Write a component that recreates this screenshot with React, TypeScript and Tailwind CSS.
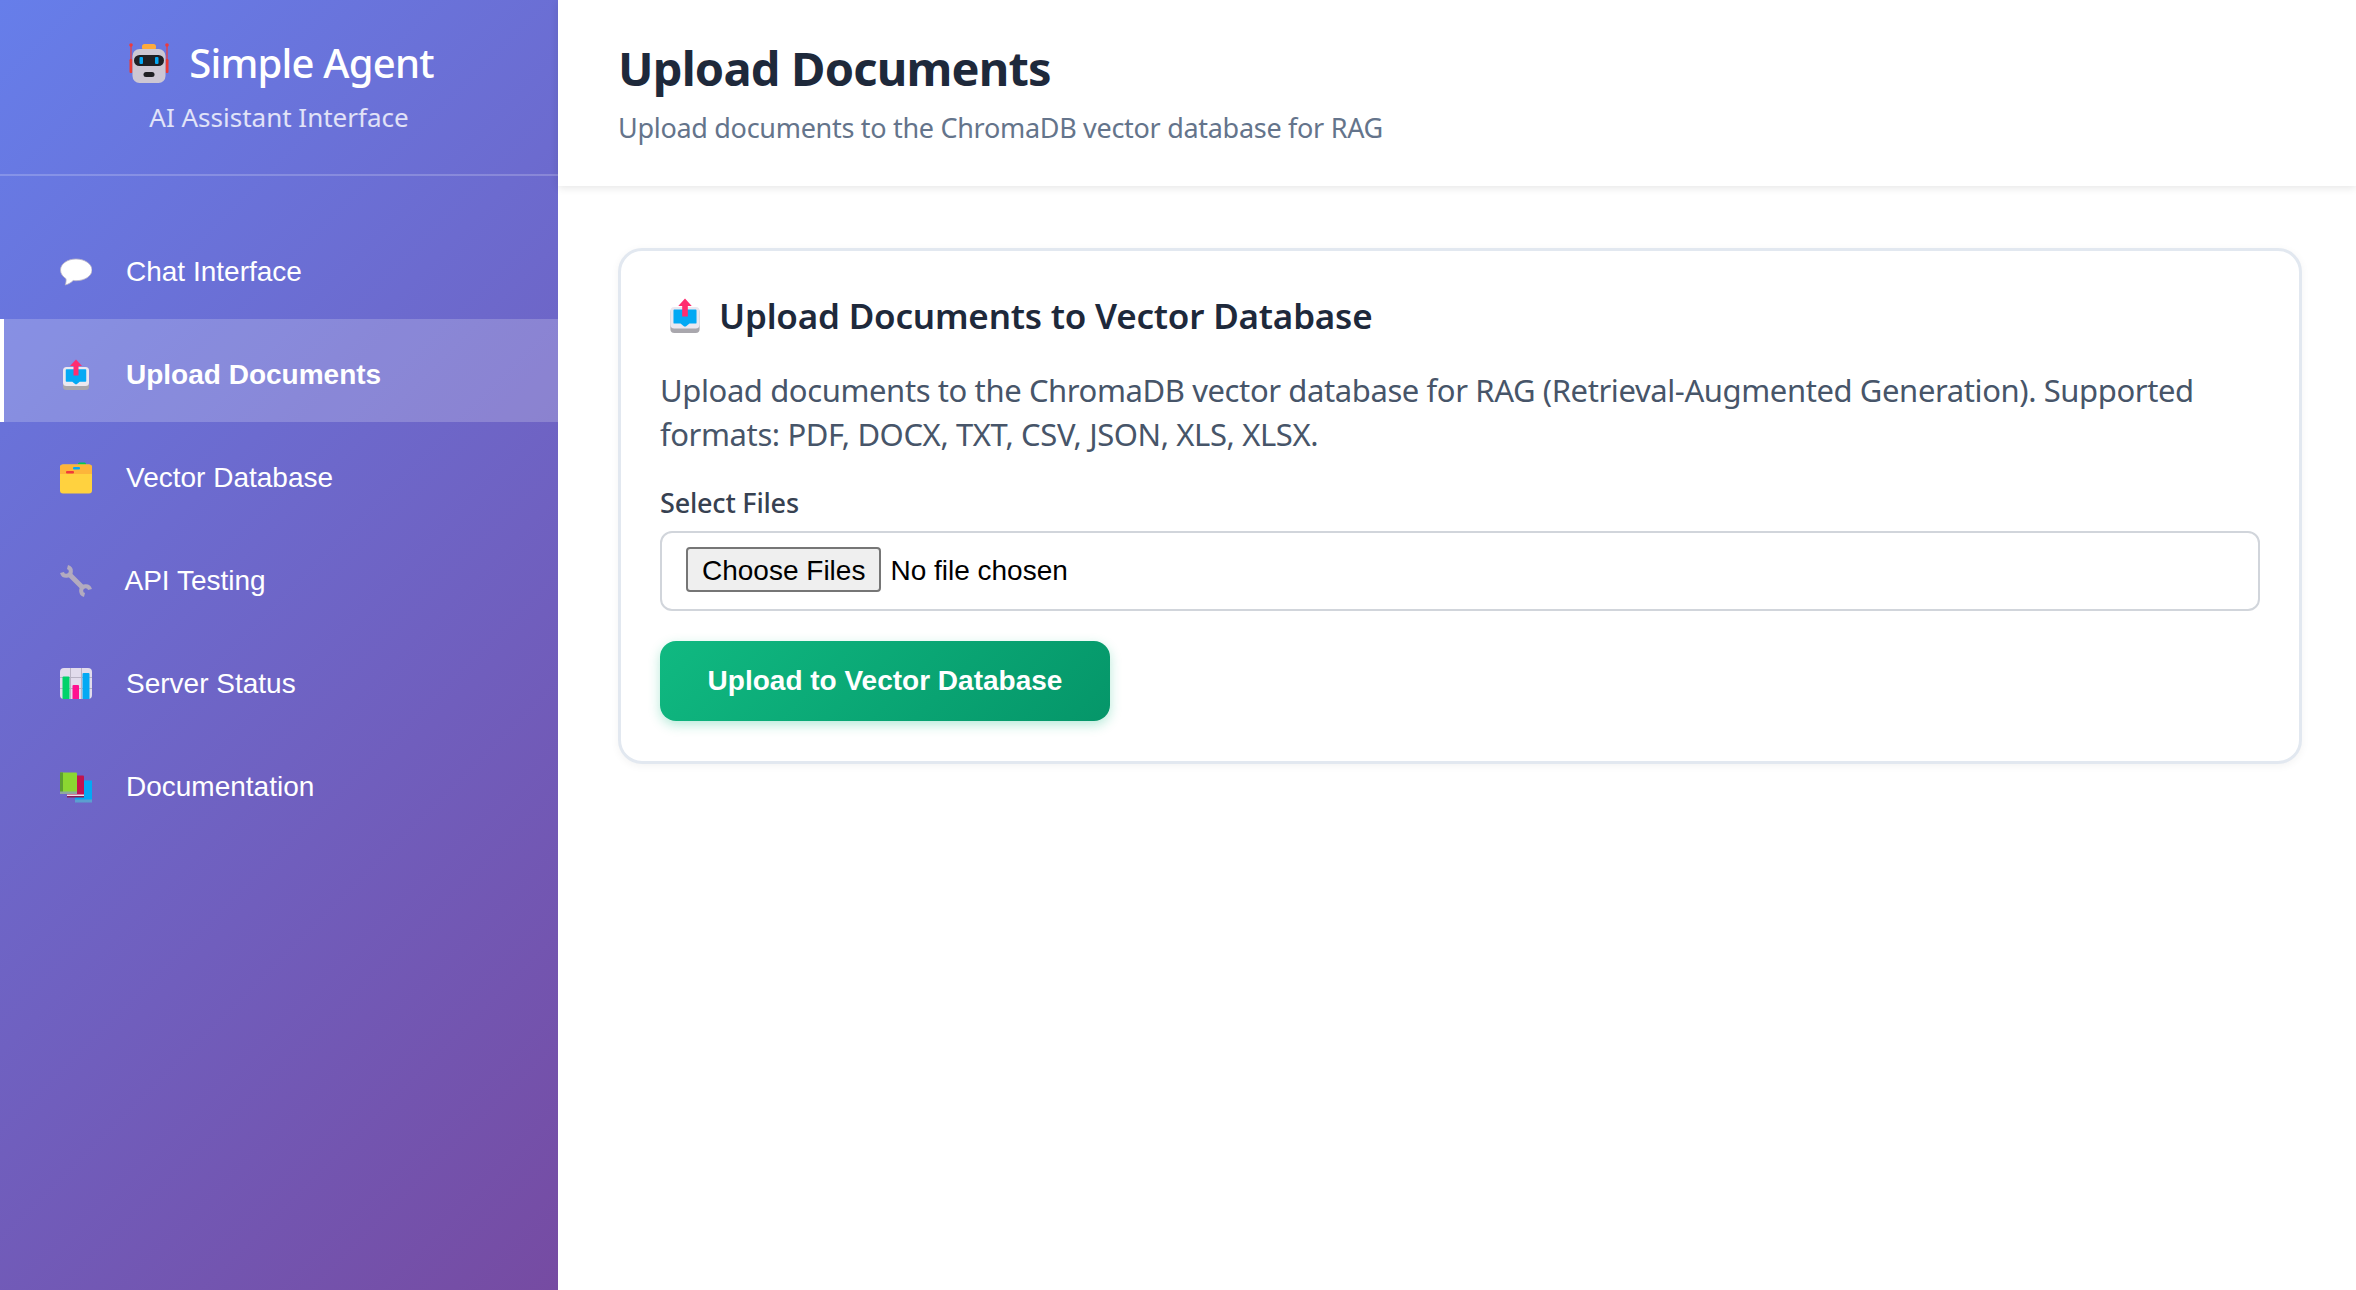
import React from "react";

const Robot = () => (
  <svg width="40" height="40" viewBox="0 0 40 40" className="shrink-0">
    <path d="M2 3v24M38 3v24" stroke="#f03a3a" strokeWidth="1.2" />
    <circle cx="2" cy="2" r="1.8" fill="#f03a3a" />
    <circle cx="38" cy="2" r="1.8" fill="#f03a3a" />
    <rect x="0.5" y="16" width="3" height="14" rx="1.2" fill="#e93a34" />
    <rect x="36.5" y="16" width="3" height="14" rx="1.2" fill="#e93a34" />
    <rect x="13" y="1" width="14" height="6" rx="2.5" fill="#fdab3d" />
    <rect x="3.500" y="6" width="33" height="34" rx="7" fill="#cdc7d3" />
    <rect x="5" y="12" width="30" height="11" rx="5.500" fill="#202024" />
    <rect x="10.500" y="14" width="3.500" height="7" rx="1" fill="#04a9f4" />
    <rect x="26" y="14" width="3.500" height="7" rx="1" fill="#04a9f4" />
    <rect x="14.500" y="29" width="11" height="5" rx="2.500" fill="#202024" />
  </svg>
);

const Chat = () => (
  <svg width="32" height="32" viewBox="0 0 32 32" className="shrink-0">
    <path d="M16 3C7.500 3 0.500 7.800 0.500 14c0 3.700 2.500 6.800 5.500 8.700 0.300 2 0 4.300-0.800 6.300 3.300-0.800 6-2.500 8-4.500 0.900 0.100 1.800 0.200 2.800 0.200 8.500 0 16-4.600 16-10.700C32 7.800 24.500 3 16 3z" fill="#ffffff" stroke="#b9b4c4" strokeWidth="0.8" />
  </svg>
);

const UploadIcon = ({ s = 32 }: { s?: number }) => (
  <svg width={s} height={s} viewBox="0 0 32 32" className="shrink-0">
    <rect x="3" y="9" width="26" height="22" rx="3.500" fill="#a9a7ad" />
    <rect x="3" y="8" width="26" height="19" rx="3.500" fill="#ebe8f0" />
    <path d="M6.500 11h19v11h-6l-3 2.500h-1l-3-2.500h-6z" fill="#04a9f4" stroke="#04a9f4" strokeWidth="1.500" strokeLinejoin="round" />
    <path d="M16 0.500l6 6.500h-3.500v9.500h-5V7H10z" fill="#ff2d6f" />
  </svg>
);

const Folder = () => (
  <svg width="32" height="32" viewBox="0 0 32 32" className="shrink-0">
    <rect x="18" y="0.500" width="8" height="4" rx="1.500" fill="#00c853" />
    <rect x="0" y="2.500" width="32" height="29" rx="3" fill="#ffd23f" />
    <path d="M0 12V5.500a3 3 0 0 1 3-3h26a3 3 0 0 1 3 3V12z" fill="#fdb53a" />
    <rect x="13" y="5" width="7" height="2.500" rx="1" fill="#04a9f4" />
    <rect x="6" y="9" width="8" height="2.500" rx="1" fill="#f03a3a" />
  </svg>
);

const Wrench = () => (
  <svg width="32" height="32" viewBox="0 0 32 32" className="mr-[-1.500px] shrink-0" fill="none" stroke="#b3abbf">
    <path d="M7.500 2A4.500 4.500 0 1 1 2 7.500" strokeWidth="4" />
    <path d="M9.500 9.500L22.500 22.500" strokeWidth="5" />
    <path d="M30 24.500A4.500 4.500 0 1 0 24.500 30" strokeWidth="4" />
  </svg>
);

const Chart = () => (
  <svg width="32" height="32" viewBox="0 0 32 32" className="shrink-0">
    <rect x="0" y="0" width="32" height="31" rx="4" fill="#e2dcec" />
    <path d="M10.500 0v31M21.500 0v31M0 9.500h32M0 20.500h32" stroke="#b9b3c4" strokeWidth="1" />
    <path d="M2.500 9.500a1 1 0 0 1 1-1h5a1 1 0 0 1 1 1V31h-7z" fill="#00d26a" />
    <path d="M12.500 18a1 1 0 0 1 1-1h4.500a1 1 0 0 1 1 1v13h-6.500z" fill="#ff0f8f" />
    <path d="M22.500 6a1 1 0 0 1 1-1h5a1 1 0 0 1 1 1v25h-7z" fill="#04a9f4" />
  </svg>
);

const Books = () => (
  <svg width="32" height="32" viewBox="0 0 32 32" className="shrink-0">
    <rect x="15" y="9.500" width="17" height="21" fill="#04a9f4" />
    <rect x="15" y="28.500" width="17" height="3" fill="#5b9fd0" />
    <rect x="7" y="4.500" width="17" height="21" rx="1" fill="#c2134e" />
    <rect x="7" y="23.500" width="17" height="1.500" fill="#e8e4ee" />
    <rect x="7" y="25" width="17" height="1.500" fill="#8a1b4f" />
    <rect x="0" y="1.500" width="17" height="21" rx="1" fill="#8bd631" />
    <rect x="0" y="1.500" width="3" height="21" fill="#5c9e31" />
    <rect x="0" y="20.500" width="17" height="2.500" fill="#8fa89f" />
  </svg>
);

const items = [
  { label: "Chat Interface", icon: <Chat /> },
  { label: "Upload Documents", icon: <UploadIcon />, active: true },
  { label: "Vector Database", icon: <Folder /> },
  { label: "API Testing", icon: <Wrench /> },
  { label: "Server Status", icon: <Chart /> },
  { label: "Documentation", icon: <Books /> },
];

export default function App() {
  return (
    <div className="flex h-[1290px] w-full overflow-hidden bg-white font-['Noto_Sans',sans-serif]">
      <aside className="flex h-full w-[558px] shrink-0 flex-col bg-[linear-gradient(135deg,#667eea_0%,#764ba2_100%)] text-white">
        <div className="h-[176px] border-b-2 border-white/20 pt-[40px] text-center">
          <div className="ml-[5px] flex items-center justify-center gap-[20px]">
            <Robot />
            <span className="text-[40px] font-medium leading-[46px] tracking-[-0.8px]">Simple Agent</span>
          </div>
          <p className="mt-[13px] text-[26px] leading-[36px] text-white/80">AI Assistant Interface</p>
        </div>
        <nav className="flex flex-col pt-[40px] font-['Liberation_Sans',sans-serif] text-[28px]">
          {items.map((it) => (
            <a
              key={it.label}
              className={`flex h-[103px] items-center gap-[34px] border-l-4 pl-[56px] pt-[8px] ${
                it.active ? "border-white bg-white/20 font-bold" : "border-transparent"
              }`}
            >
              {it.icon}
              <span>{it.label}</span>
            </a>
          ))}
        </nav>
      </aside>
      <main className="flex min-w-0 flex-1 flex-col">
        <header className="h-[186px] bg-white px-[60px] pt-[36px] shadow-[0_2px_8px_rgba(0,0,0,0.1)]">
          <h1 className="text-[47px] font-bold leading-[64px] tracking-[-0.8px] text-[#1e293b]">Upload Documents</h1>
          <p className="mt-[9px] text-[27px] leading-[38px] tracking-[-0.3px] text-[#64748b]">Upload documents to the ChromaDB vector database for RAG</p>
        </header>
        <section className="pl-[60px] pr-[54px] pt-[62px]">
          <div className="h-[516px] rounded-[24px] border-[3px] border-[#e2e8f0] bg-white px-[39px] pt-[43px] shadow-[0_2px_8px_rgba(0,0,0,0.05)]">
            <h2 className="flex h-[44px] items-center gap-[16px] pl-[7px] text-[35px] font-semibold tracking-[-0.2px] text-[#1e293b]">
              <UploadIcon s={36} />
              <span>Upload Documents to Vector Database</span>
            </h2>
            <p className="mt-[30px] text-[31px] leading-[44px] tracking-[-0.4px] text-[#475569]">
              Upload documents to the ChromaDB vector database for RAG (Retrieval-Augmented Generation). Supported formats: PDF, DOCX, TXT, CSV, JSON, XLS, XLSX.
            </p>
            <label className="mt-[27px] block text-[27px] font-medium leading-[40px] tracking-[-0.2px] text-[#374151]">Select Files</label>
            <input
              type="file"
              multiple
              className="mt-[8px] block h-[80px] w-full rounded-[12px] border-2 border-[#d1d5db] px-[24px] py-[14px] font-['Liberation_Sans',sans-serif] text-[28px] leading-[44px] text-black file:mr-[9px] file:h-[45px] file:rounded-[4px] file:border-2 file:border-[#767676] file:bg-[#efefef] file:px-[14px] file:text-[28px] file:text-black"
            />
            <button className="mt-[30px] block h-[80px] w-[450px] rounded-[16px] bg-[linear-gradient(135deg,#10b981,#059669)] font-['Liberation_Sans',sans-serif] text-[28px] font-bold text-white shadow-[0_4px_12px_rgba(16,185,129,0.3)]">
              Upload to Vector Database
            </button>
          </div>
        </section>
      </main>
    </div>
  );
}
